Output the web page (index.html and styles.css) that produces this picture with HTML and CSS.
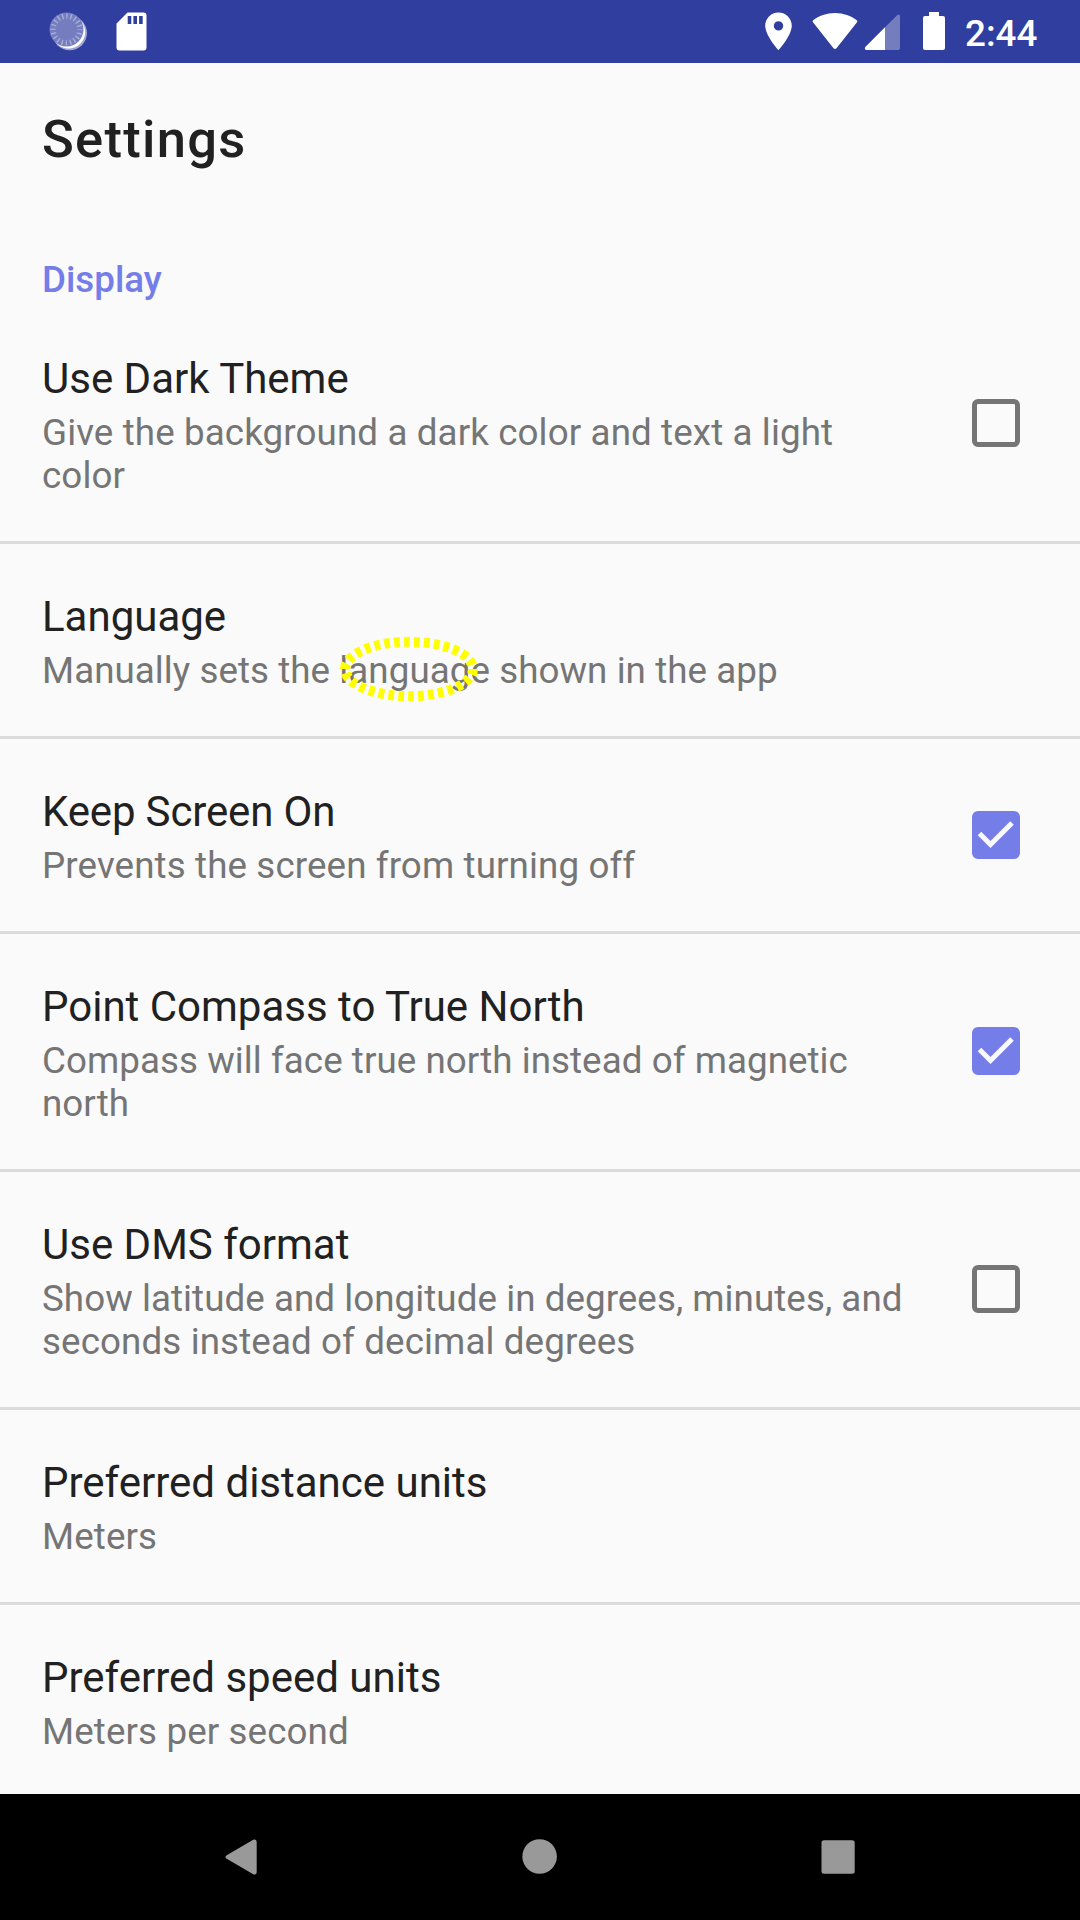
FILE: index.html
```html
<!DOCTYPE html>
<html lang="en">
<head>
<meta charset="utf-8">
<title>Settings</title>
<link rel="stylesheet" href="styles.css">
</head>
<body>
<div class="screen">
  <header class="status-bar">
    <svg class="status-icons-left" width="160" height="63" viewBox="0 0 160 63">
      <circle cx="69.7" cy="33" r="17.3" fill="#fff" fill-opacity=".55"/>
      <circle cx="68.6" cy="32" r="16.6" fill="#fff"/>
      <circle cx="66.5" cy="29.5" r="17" fill="#757dbf"/>
      <circle cx="66.5" cy="29.5" r="13.4" fill="none" stroke="#a6acd6" stroke-width="5.4" stroke-dasharray="1.4 2.81" stroke-dashoffset=".7"/>
      <path d="M127.500 12.500H143.500a3 3 0 0 1 3 3V47.500a3 3 0 0 1-3 3H119.500a3 3 0 0 1-3-3V23.500ZM127.700 16V24h3.600V16ZM133.400 16V24h3.600V16ZM139.100 16V24h3.600V16Z" fill="#fff" fill-rule="evenodd"/>
    </svg>
    <svg class="status-icons-right" width="206" height="63" viewBox="740 0 206 63" fill="#fff">
      <path fill-rule="evenodd" d="M778.500 12.500C771 12.500 765.200 18.500 765.200 25.800C765.200 35.500 778.500 50.300 778.500 50.300S791.800 35.500 791.800 25.800C791.800 18.500 786 12.500 778.500 12.500ZM778.500 21.200a4.700 4.700 0 1 1 0 9.400a4.700 4.700 0 0 1 0-9.400Z"/>
      <path d="M812.900 20.500C819 15.800 826.500 13 835 13S851 15.800 857 20.500Q857.700 21.200 857 22.200L836.500 48.200Q835 49.800 833.500 48.200L813 22.200Q812.200 21.200 812.900 20.500Z"/>
      <path d="M885 27.200L896.900 15.400Q900 13.200 900 16.600V48Q900 50 898 50H885Z" fill-opacity=".33"/>
      <path d="M885 27.200V50H866.500Q864 49.500 865.300 47Z"/>
      <path d="M929 12H939V16H943Q945 16 945 18V48Q945 50 943 50H925Q923 50 923 48V18Q923 16 925 16H929Z"/>
    </svg>
    <span class="clock">2:44</span>
  </header>
  <main class="content">
    <h1 class="page-title">Settings</h1>
    <h2 class="section-title">Display</h2>
    <ul class="preferences">
      <li class="preference">
        <div class="preference-text"><div class="title">Use Dark Theme</div><div class="summary loose">Give the background a dark color and text a light<br>color</div></div>
        <span class="checkbox"></span>
      </li>
      <li class="preference">
        <div class="preference-text"><div class="title">Language</div><div class="summary">Manually sets the <span class="marked">language<svg class="marker" width="142" height="68" viewBox="0 0 142 68"><ellipse cx="71" cy="34" rx="64" ry="27.200" pathLength="300" fill="none" stroke="#ff0" stroke-width="10" stroke-dasharray="5.8 4.2"/></svg></span> shown in the app</div></div>
      </li>
      <li class="preference">
        <div class="preference-text"><div class="title tight">Keep Screen On</div><div class="summary loose">Prevents the screen from turning off</div></div>
        <span class="checkbox checked"><svg width="48" height="48" viewBox="0 0 48 48"><path d="M7.500 22.500L18.500 33.500L40 12" fill="none" stroke="#fafafa" stroke-width="5"/></svg></span>
      </li>
      <li class="preference">
        <div class="preference-text"><div class="title">Point Compass to True North</div><div class="summary">Compass will face true north instead of magnetic<br>north</div></div>
        <span class="checkbox checked"><svg width="48" height="48" viewBox="0 0 48 48"><path d="M7.500 22.500L18.500 33.500L40 12" fill="none" stroke="#fafafa" stroke-width="5"/></svg></span>
      </li>
      <li class="preference">
        <div class="preference-text"><div class="title">Use DMS format</div><div class="summary">Show latitude and longitude in degrees, minutes, and<br><span class="loose">seconds instead of decimal degrees</span></div></div>
        <span class="checkbox"></span>
      </li>
      <li class="preference">
        <div class="preference-text"><div class="title">Preferred distance units</div><div class="summary loose">Meters</div></div>
      </li>
      <li class="preference">
        <div class="preference-text"><div class="title">Preferred speed units</div><div class="summary loose">Meters per second</div></div>
      </li>
    </ul>
  </main>
  <nav class="nav-bar">
    <svg width="1080" height="126" viewBox="0 1794 1080 126" fill="#999">
      <path d="M226.300 1855.600L253.200 1839.700Q256.700 1838.500 256.700 1842V1872Q256.700 1875.500 253.200 1874.300L226.300 1858.400Q224.600 1857 226.300 1855.600Z"/>
      <circle cx="539.600" cy="1856.500" r="17.300"/>
      <rect x="821.500" y="1840.300" width="33.200" height="33.400" rx="2.500"/>
    </svg>
  </nav>
</div>
</body>
</html>
```
FILE: styles.css
```css
* { box-sizing: border-box; }
body { margin: 0; font-family: Roboto, sans-serif; background: #fafafa; }
.screen { width: 1080px; height: 1920px; display: flex; flex-direction: column; overflow: hidden; }
.status-bar { height: 63px; flex: none; display: flex; background: #303f9f; color: #fff; }
.status-icons-left { margin-right: auto; }
.status-icons-right { flex: none; }
.clock { width: 134px; padding-left: 19px; font-size: 36.75px; line-height: 67px; font-weight: 500; }
.content { height: 1731px; flex: none; overflow: hidden; color: #212121; }
.page-title { margin: 0; padding: 45px 42px 0; height: 187px; font-size: 52.5px; line-height: 62px; font-weight: 500; letter-spacing: 1.3px; }
.section-title { margin: 0; padding: 8px 42px 0; height: 56px; font-size: 36.75px; line-height: 43px; font-weight: 500; color: #757de8; }
.preferences { margin: 0; padding: 0; list-style: none; }
.preference { display: flex; align-items: center; justify-content: space-between; padding: 48px 60px 44px 42px; border-bottom: 3px solid #dbdbdb; }
.preference:last-child { border-bottom: 0; }
.title { font-size: 42px; line-height: 49px; margin-bottom: 8px; white-space: nowrap; }
.title.tight { letter-spacing: -0.15px; }
.summary { font-size: 36.75px; line-height: 43px; letter-spacing: 0.05px; color: #757575; white-space: nowrap; }
.summary.loose, .loose { letter-spacing: 0.11px; }
.checkbox { width: 48px; height: 48px; margin-bottom: 5px; flex: none; border: 5px solid #757575; border-radius: 6px; }
.checked { border: 0; background: #757de8; }
.checked svg { display: block; }
.marked { position: relative; }
.marker { position: absolute; left: -1px; top: -14px; }
.nav-bar { height: 126px; flex: none; background: #000; }
.nav-bar svg { display: block; }
```
